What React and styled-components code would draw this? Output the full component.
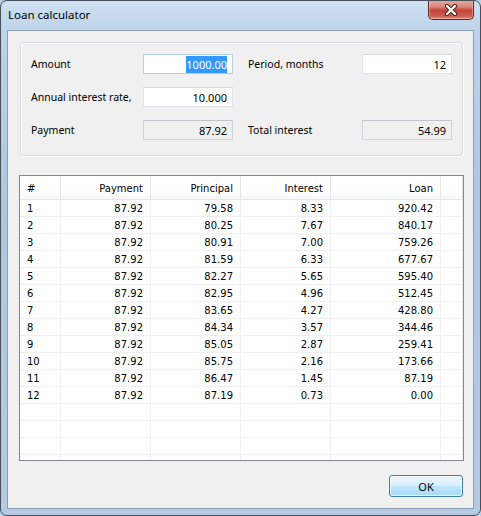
import React from 'react';
import styled, { createGlobalStyle } from 'styled-components';

const GlobalStyle = createGlobalStyle`
    html, body {
        margin: 0;
        padding: 0;
        background: #b9cfe6;
    }
    * {
        box-sizing: border-box;
    }
`;

const Window = styled.div`
    width: 481px;
    height: 516px;
    display: flex;
    flex-direction: column;
    border: 1px solid #46505c;
    border-radius: 7px;
    overflow: hidden;
    background: linear-gradient(180deg, #cfe0f1 0%, #bcd3ea 6%, #aec6df 40%, #b5cbe3 100%);
    font-family: "Noto Sans", "DejaVu Sans", sans-serif;
    color: #000;
`;

const TitleBar = styled.div`
    height: 29px;
    flex-shrink: 0;
    display: flex;
    align-items: flex-start;
    justify-content: space-between;
    padding-left: 7px;
`;

const Title = styled.div`
    font-size: 11.5px;
    line-height: 28px;
`;

const CloseButton = styled.div`
    width: 46px;
    height: 20px;
    margin-right: 6px;
    margin-top: -1px;
    display: flex;
    align-items: center;
    justify-content: center;
    border: 1px solid #5a2a24;
    border-top: none;
    border-radius: 0 0 5px 5px;
    background: linear-gradient(180deg, #e9a99c 0%, #d98a7c 35%, #c4443a 55%, #cf5c4e 85%, #e39585 100%);
    box-shadow: inset 0 0 0 1px rgba(255, 200, 190, 0.45);
`;

const Client = styled.div`
    flex: 1;
    margin: 0 6px 6px 6px;
    border: 1px solid #8e9eb2;
    background: #f0f0f0;
    display: flex;
    flex-direction: column;
    padding: 11px 9px 0 11px;
`;

const GroupBox = styled.div`
    margin: 0 1px;
    height: 114px;
    border: 1px solid #d5dfe5;
    border-radius: 3px;
    box-shadow: inset 1px 1px 0 #fff, 1px 1px 0 #fff;
    padding: 11px 10px 0 10px;
    display: grid;
    grid-template-columns: 112px 90px 15px 114px 90px;
    grid-auto-rows: 20px;
    row-gap: 13px;
    align-items: center;
`;

const Label = styled.div`
    font-size: 10.5px;
    grid-column: ${(props) => props.col};
    white-space: nowrap;
`;

const Field = styled.div`
    grid-column: ${(props) => props.col};
    height: 20px;
    display: flex;
    align-items: center;
    justify-content: flex-end;
    padding-right: 5px;
    font-size: 11px;
    background: ${(props) => (props.readOnly ? '#f0f0f0' : '#fff')};
    border: 1px solid ${(props) => (props.readOnly ? '#cfd2d8' : '#e2e3ea')};
    border-top-color: ${(props) => (props.readOnly ? '#c2c4ca' : '#d8d9de')};
    ${(props) => props.focused && 'border-color: #b5cfe4;'}
`;

const Selected = styled.span`
    background: #3399ff;
    color: #fff;
    padding: 1px 0;
`;

const Table = styled.div`
    margin-top: 19px;
    height: 286px;
    border: 1px solid #828790;
    background: #fff;
    overflow: hidden;
    font-family: "DejaVu Sans", sans-serif;
    font-size: 10px;
`;

const Row = styled.div`
    display: grid;
    grid-template-columns: 41px 90px 90px 90px 110px 1fr;
    height: ${(props) => (props.header ? '24px' : '17px')};
    border-bottom: 1px solid ${(props) => (props.header ? '#e5e5e5' : '#f0f0f0')};
    background: ${(props) => (props.header ? 'linear-gradient(180deg, #ffffff 0%, #ffffff 60%, #f7f8fa 100%)' : '#fff')};
`;

const Cell = styled.div`
    display: flex;
    align-items: center;
    justify-content: ${(props) => (props.left ? 'flex-start' : 'flex-end')};
    padding: ${(props) => (props.left ? '1px 0 0 7px' : '1px 7px 0 0')};
    border-right: 1px solid ${(props) => (props.header ? '#e5e5e5' : '#f0f0f0')};
    white-space: nowrap;
    color: #000;
`;

const Footer = styled.div`
    display: flex;
    justify-content: flex-end;
    margin-top: 14px;
    padding-right: 1px;
`;

const Button = styled.div`
    width: 74px;
    height: 22px;
    display: flex;
    align-items: center;
    justify-content: center;
    font-size: 11px;
    border: 1px solid #3c7fb1;
    border-radius: 3px;
    background: linear-gradient(180deg, #eaf6fd 0%, #d9f0fc 48%, #bee6fd 52%, #a7d9f5 100%);
    box-shadow: inset 0 0 0 1px rgba(255, 255, 255, 0.7);
`;

const rows = [
    ['1', '87.92', '79.58', '8.33', '920.42'],
    ['2', '87.92', '80.25', '7.67', '840.17'],
    ['3', '87.92', '80.91', '7.00', '759.26'],
    ['4', '87.92', '81.59', '6.33', '677.67'],
    ['5', '87.92', '82.27', '5.65', '595.40'],
    ['6', '87.92', '82.95', '4.96', '512.45'],
    ['7', '87.92', '83.65', '4.27', '428.80'],
    ['8', '87.92', '84.34', '3.57', '344.46'],
    ['9', '87.92', '85.05', '2.87', '259.41'],
    ['10', '87.92', '85.75', '2.16', '173.66'],
    ['11', '87.92', '86.47', '1.45', '87.19'],
    ['12', '87.92', '87.19', '0.73', '0.00'],
    ['', '', '', '', ''],
    ['', '', '', '', ''],
    ['', '', '', '', ''],
    ['', '', '', '', ''],
];

const headers = ['#', 'Payment', 'Principal', 'Interest', 'Loan'];

function CloseIcon() {
    return (
        <svg width="14" height="12" viewBox="0 0 14 12">
            <path d="M3 2 L11 10 M11 2 L3 10" stroke="#4a1c16" strokeWidth="4.2" strokeLinecap="round" />
            <path d="M3 2 L11 10 M11 2 L3 10" stroke="#ffffff" strokeWidth="2.4" strokeLinecap="round" />
        </svg>
    );
}

export default function App() {
    return (
        <>
            <GlobalStyle />
            <Window>
                <TitleBar>
                    <Title>Loan calculator</Title>
                    <CloseButton>
                        <CloseIcon />
                    </CloseButton>
                </TitleBar>
                <Client>
                    <GroupBox>
                        <Label col={1}>Amount</Label>
                        <Field col={2} focused>
                            <Selected>1000.00</Selected>
                        </Field>
                        <Label col={4}>Period, months</Label>
                        <Field col={5}>12</Field>

                        <Label col={1}>Annual interest rate,</Label>
                        <Field col={2}>10.000</Field>

                        <Label col={1}>Payment</Label>
                        <Field col={2} readOnly>87.92</Field>
                        <Label col={4}>Total interest</Label>
                        <Field col={5} readOnly>54.99</Field>
                    </GroupBox>

                    <Table>
                        <Row header>
                            {headers.map((h, i) => (
                                <Cell header key={h} left={i === 0}>
                                    {h}
                                </Cell>
                            ))}
                            <Cell header />
                        </Row>
                        {rows.map((r, idx) => (
                            <Row key={idx}>
                                {r.map((v, i) => (
                                    <Cell key={i} left={i === 0}>
                                        {v}
                                    </Cell>
                                ))}
                                <Cell />
                            </Row>
                        ))}
                    </Table>

                    <Footer>
                        <Button>OK</Button>
                    </Footer>
                </Client>
            </Window>
        </>
    );
}
